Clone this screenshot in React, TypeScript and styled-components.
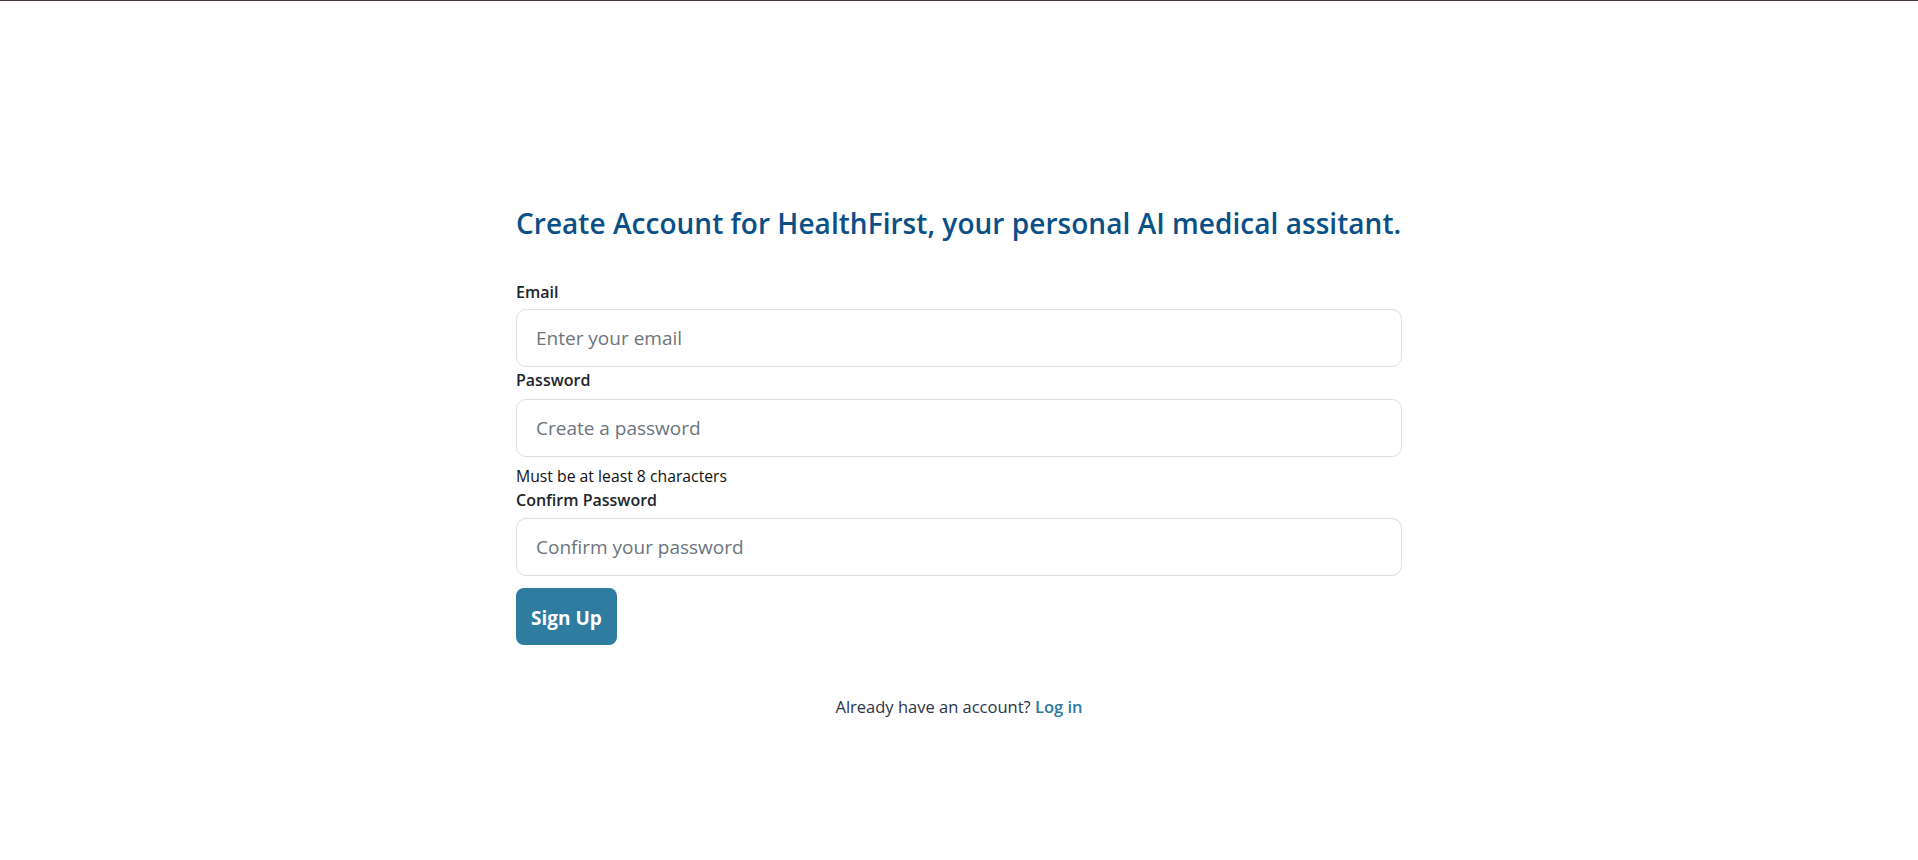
import React from "react";
import styled, { createGlobalStyle } from "styled-components";

const GlobalStyle = createGlobalStyle`
  html, body {
    margin: 0;
    padding: 0;
    background: #ffffff;
  }
  body {
    border-top: 1px solid #4a3a41;
    font-family: "Open Sans", "Noto Sans", "Liberation Sans", sans-serif;
    color: #212529;
  }
  * { box-sizing: border-box; }
`;

const Page = styled.main`
  display: flex;
  flex-direction: column;
  align-items: center;
  padding-top: 206px;
  min-height: 859px;
`;

const Card = styled.section`
  width: 886px;
  display: flex;
  flex-direction: column;
`;

const Title = styled.h1`
  margin: 0 0 39px 0;
  font-size: 28px;
  line-height: 33.6px;
  font-weight: 600;
  color: #0a4f86;
  letter-spacing: 0.04px;
  white-space: nowrap;
`;

const Form = styled.form`
  display: flex;
  flex-direction: column;
`;

const Label = styled.label<{ $gap?: number }>`
  display: block;
  font-size: 16px;
  line-height: 24px;
  font-weight: 600;
  color: #212529;
  margin-bottom: ${(p) => p.$gap ?? 6}px;
`;

const Input = styled.input`
  display: block;
  width: 100%;
  height: 58px;
  padding: 0 19px;
  border: 1px solid #dcdee1;
  border-radius: 10px;
  font-family: inherit;
  font-size: 19px;
  color: #212529;
  background: #fff;
  outline: none;
  &::placeholder {
    color: #6c757d;
  }
`;

const Hint = styled.div`
  margin-top: 7px;
  font-size: 15.75px;
  line-height: 24px;
  color: #111;
`;

const Spacer = styled.div<{ $h: number }>`
  height: ${(p) => p.$h}px;
`;

const Button = styled.button`
  align-self: flex-start;
  margin-top: 12px;
  height: 57px;
  padding: 3px 15px 0;
  border: none;
  border-radius: 8px;
  background: #2e7c9f;
  color: #ffffff;
  font-family: inherit;
  font-size: 19px;
  font-weight: 700;
  cursor: pointer;
`;

const Footer = styled.p`
  margin: 50px 0 0 0;
  text-align: center;
  font-size: 16.5px;
  line-height: 24px;
  color: #2b3448;
`;

const Link = styled.a`
  color: #2a7aa0;
  font-weight: 600;
  text-decoration: none;
`;

export default function App() {
  return (
    <>
      <GlobalStyle />
      <Page>
        <Card>
          <Title>Create Account for HealthFirst, your personal AI medical assitant.</Title>
          <Form onSubmit={(e) => e.preventDefault()}>
            <Label htmlFor="email" $gap={5}>Email</Label>
            <Input id="email" type="email" placeholder="Enter your email" />
            <Spacer $h={1} />
            <Label htmlFor="password" $gap={7}>Password</Label>
            <Input id="password" type="password" placeholder="Create a password" />
            <Hint>Must be at least 8 characters</Hint>
            <Label htmlFor="confirm" $gap={6}>Confirm Password</Label>
            <Input id="confirm" type="password" placeholder="Confirm your password" />
            <Button type="submit">Sign Up</Button>
          </Form>
          <Footer>
            Already have an account? <Link href="#">Log in</Link>
          </Footer>
        </Card>
      </Page>
    </>
  );
}
